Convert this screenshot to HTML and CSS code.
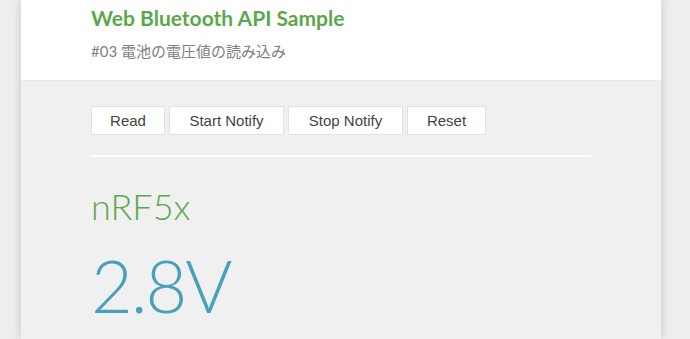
FILE: index.html
```html
<!DOCTYPE html>
<html lang="ja">
<head>
    <meta charset="UTF-8">
    <meta name="viewport" content="width=device-width, initial-scale=1.0">
    <title>Web Bluetooth API Sample</title>
    <link rel="stylesheet" href="styles.css">
</head>
<body>

    <div class="card">
        <!-- ヘッダー -->
        <header class="header">
            <h1 class="title">Web Bluetooth API Sample</h1>
            <p class="subtitle">#03 電池の電圧値の読み込み</p>
        </header>

        <div class="content">
            <div class="buttons">
                <button class="btn btn-read">Read</button>
                <button class="btn btn-notify">Start Notify</button>
                <button class="btn btn-notify">Stop Notify</button>
                <button class="btn btn-reset">Reset</button>
            </div>

            <hr class="divider">

            <h2 class="device">nRF5x</h2>
            <div class="value">2.8V</div>
        </div>
    </div>

</body>
</html>
```

FILE: styles.css
```css
/* 全体 */
body {
    margin: 0;
    background: #eeeeee;
    font-family: Lato, "Noto Sans CJK JP", sans-serif;
    height: 339px;
    overflow: hidden;
}

.card {
    width: 640px;
    margin-left: 21px;
    height: 100vh;
    background: #f0f0f0;
    box-shadow: 0 0 10px rgba(0, 0, 0, 0.18);
}

/* ヘッダー */
.header {
    background: #ffffff;
    height: 81px;
    padding: 0 70px;
    box-sizing: border-box;
    border-bottom: 1px solid #e8e8e8;
}

.title {
    margin: 0;
    padding-top: 4px;
    font-size: 21px;
    line-height: 28px;
    font-weight: 700;
    color: #5ba84c;
}

.subtitle {
    margin: 9px 0 0;
    font-size: 15px;
    line-height: 20px;
    color: #808080;
}

/* コンテンツ */
.content {
    padding: 25px 70px 0;
}

.buttons {
    display: flex;
    gap: 4px;
}

.btn {
    font-family: "Liberation Sans", Arial, sans-serif;
    font-size: 15px;
    color: #444444;
    background: #ffffff;
    border: 1px solid #e2e2e2;
    height: 29px;
    padding: 0;
}

.btn-read {
    width: 74px;
}

.btn-notify {
    width: 115px;
}

.btn-reset {
    width: 79px;
}

.divider {
    border: none;
    height: 2px;
    background: #ffffff;
    margin: 20px 0 0;
}

.device {
    margin: 29px 0 0;
    font-size: 36px;
    line-height: 40px;
    font-weight: 300;
    color: #5ba84c;
}

.value {
    margin-top: 19px;
    font-size: 72px;
    line-height: 80px;
    font-weight: 300;
    letter-spacing: -2px;
    color: #4aa0bc;
}
```
